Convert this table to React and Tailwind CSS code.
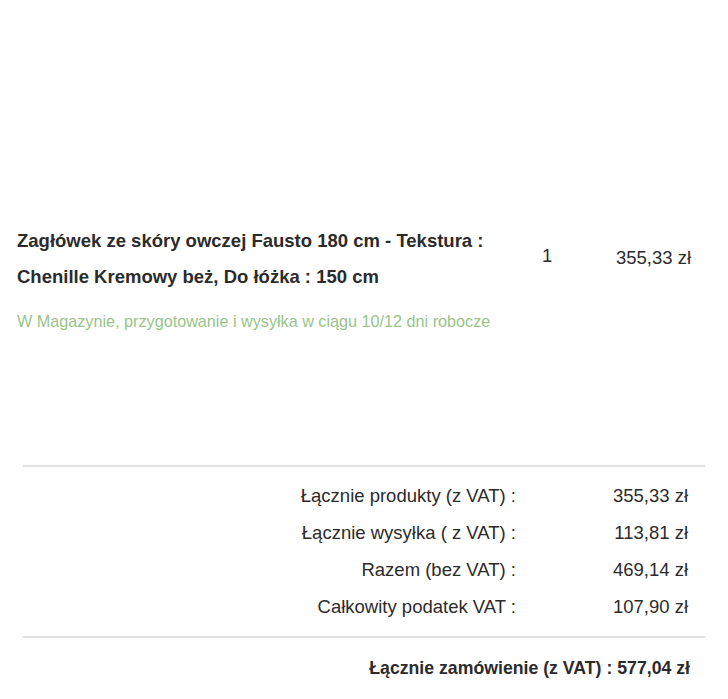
export default function App() {
  const rows = [
    ["Łącznie produkty (z VAT) :", "355,33 zł"],
    ["Łącznie wysyłka ( z VAT) :", "113,81 zł"],
    ["Razem (bez VAT) :", "469,14 zł"],
    ["Całkowity podatek VAT :", "107,90 zł"],
  ];
  return (
    <div className="w-[728px] h-[699px] bg-white text-[#2b2b2b] overflow-hidden flex flex-col" style={{ fontFamily: '"Liberation Sans", Arial, sans-serif' }}>
      <div className="h-[223px] shrink-0" />
      <div className="flex pl-[17px]">
        <div className="w-[490px] text-[18.5px] font-bold leading-[36px]">
          Zagłówek ze skóry owczej Fausto 180 cm - Tekstura : Chenille Kremowy beż, Do łóżka : 150 cm
        </div>
        <div className="w-[60px] text-[18.5px] leading-[36px] pt-[15px] pl-[35px]">1</div>
        <div className="w-[124px] text-[18.5px] leading-[36px] pt-[17px] text-right">355,33 zł</div>
      </div>
      <div className="pl-[17px] pt-[16px] text-[16.2px] leading-[20px] text-[#98c48a]">W Magazynie, przygotowanie i wysyłka w ciągu 10/12 dni robocze</div>
      <div className="mx-[23px] mt-[134px] h-[2px] bg-[#e2e2e2] shrink-0" />
      <div className="pt-[17px] flex flex-col gap-[14px]">
        {rows.map(([l, v]) => (
          <div key={l} className="flex text-[18.5px] leading-[23px]">
            <div className="w-[516px] text-right">{l}</div>
            <div className="w-[172px] text-right">{v}</div>
          </div>
        ))}
      </div>
      <div className="mx-[23px] mt-[18px] h-[2px] bg-[#e2e2e2] shrink-0" />
      <div className="pt-[19px] pr-[38px] text-right text-[17.7px] leading-[23px] font-bold">Łącznie zamówienie (z VAT) : 577,04 zł</div>
    </div>
  );
}
